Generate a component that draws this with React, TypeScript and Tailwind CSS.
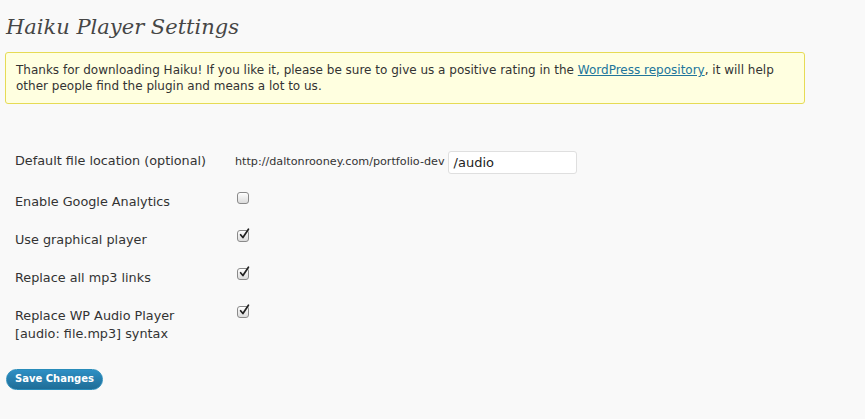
import React from 'react';

const sans = { fontFamily: '"DejaVu Sans", "Lucida Grande", Verdana, sans-serif' };

function Check({ checked }: { checked?: boolean }) {
  return (
    <span className="relative block h-[12px] w-[12px] rounded-[3px] border border-[#8a8a8a] bg-gradient-to-b from-[#ffffff] to-[#dcdcdc] shadow-[inset_0_1px_0_#fff]">
      {checked && (
        <svg viewBox="0 0 14 14" className="absolute left-[1px] top-[-4px] h-[14px] w-[11px]">
          <path d="M2 8 L5 11.5 L12 1" fill="none" stroke="#222" strokeWidth="2.2" strokeLinecap="round" strokeLinejoin="round" />
        </svg>
      )}
    </span>
  );
}

const rows: { label: React.ReactNode; checked: boolean }[] = [
  { label: 'Enable Google Analytics', checked: false },
  { label: 'Use graphical player', checked: true },
  { label: 'Replace all mp3 links', checked: true },
  { label: <>Replace WP Audio Player<br />[audio: file.mp3] syntax</>, checked: true },
];

export default function App() {
  return (
    <div className="h-[419px] w-[865px] overflow-hidden bg-[#f9f9f9] text-[#333]" style={sans}>
      <h2
        className="pl-[6px] pt-[13px] text-[21px] italic leading-[29px] text-[#464646]"
        style={{ fontFamily: '"DejaVu Serif", Georgia, serif' }}
      >
        Haiku Player Settings
      </h2>

      <div className="ml-[5px] mt-[10px] w-[800px] rounded-[3px] border border-[#e6db55] bg-[#ffffe0] px-[10px] py-[9px] text-[12px] leading-[16px] text-[#333]">
        Thanks for downloading Haiku! If you like it, please be sure to give us a positive rating in the{' '}
        <a className="text-[#21759b] underline">WordPress repository</a>, it will help other people find the plugin and means a lot to us.
      </div>

      <div className="mt-[38px] pl-[15px]">
        <div className="flex h-[43px] items-start">
          <div className="w-[220px] pt-[10px] text-[12.8px] leading-[18px]">Default file location (optional)</div>
          <div className="flex items-center pt-[9px]">
            <span className="text-[11.2px]">http://daltonrooney.com/portfolio-dev</span>
            <span className="ml-[3px] flex h-[23px] w-[129px] items-center rounded-[3px] border border-[#dfdfdf] bg-white pl-[5px] text-[13px] text-[#222]">
              /audio
            </span>
          </div>
        </div>

        {rows.map((r, i) => (
          <div key={i} className="flex h-[38px] items-start">
            <div className="w-[222px] pt-[8px] text-[12.8px] leading-[18px]">{r.label}</div>
            <div className="pt-[7px]">
              <Check checked={r.checked} />
            </div>
          </div>
        ))}
      </div>

      <div className="mt-[28px] pl-[6px]">
        <button className="h-[21px] rounded-full border border-[#298cba] bg-gradient-to-b from-[#2e8fc4] to-[#1f6d97] px-[8px] text-[10px] font-bold leading-none text-white">
          Save Changes
        </button>
      </div>
    </div>
  );
}
